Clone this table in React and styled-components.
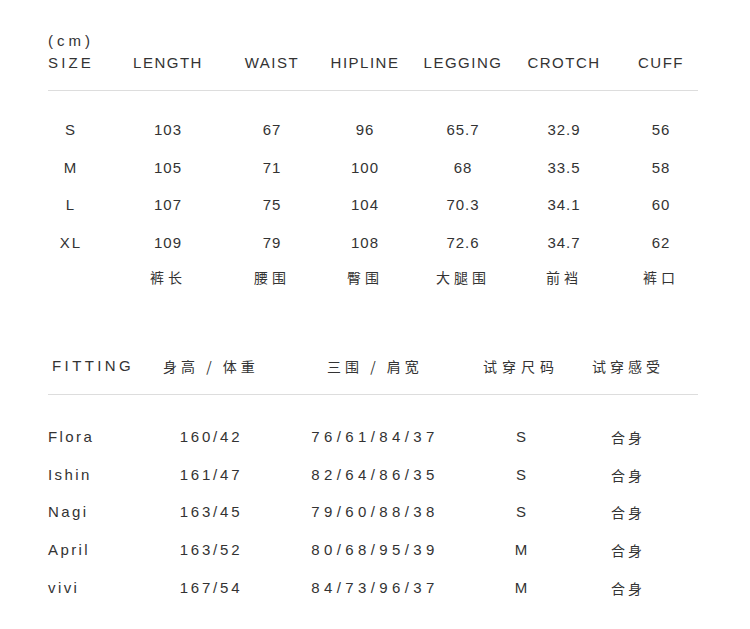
import React from 'react';
import styled, { createGlobalStyle } from 'styled-components';

const GlobalStyle = createGlobalStyle`
  html, body {
    margin: 0;
    padding: 0;
    background: #ffffff;
  }
  body {
    font-family: "Liberation Sans", Arial, "Noto Sans CJK SC", sans-serif;
    color: #333333;
  }
`;

// column widths chosen so the centres land where the printed chart puts them
const sizeCols = '98px 96px 112px 74px 122px 80px 114px';
const fitCols = '81px 164px 164px 128px 86px';

const sizeRows = [
  ['S', '103', '67', '96', '65.7', '32.9', '56'],
  ['M', '105', '71', '100', '68', '33.5', '58'],
  ['L', '107', '75', '104', '70.3', '34.1', '60'],
  ['XL', '109', '79', '108', '72.6', '34.7', '62'],
];

const sizeHeads = ['SIZE', 'LENGTH', 'WAIST', 'HIPLINE', 'LEGGING', 'CROTCH', 'CUFF'];
const cnLabels = ['', '裤长', '腰围', '臀围', '大腿围', '前裆', '裤口'];

const fitRows = [
  ['Flora', '160/42', '76/61/84/37', 'S', '合身'],
  ['Ishin', '161/47', '82/64/86/35', 'S', '合身'],
  ['Nagi', '163/45', '79/60/88/38', 'S', '合身'],
  ['April', '163/52', '80/68/95/39', 'M', '合身'],
  ['vivi', '167/54', '84/73/96/37', 'M', '合身'],
];

const Page = styled.div`
  width: 750px;
  height: 629px;
  padding-top: 32px;
  box-sizing: border-box;
  overflow: hidden;
`;

const Unit = styled.div`
  margin-left: 48px;
  font-size: 15px;
  line-height: 18px;
  letter-spacing: 4px;
`;

const Grid = styled.div`
  display: grid;
  grid-template-columns: ${({ $cols }) => $cols};
  margin-left: ${({ $left }) => $left}px;
  height: ${({ $h }) => $h}px;
  align-items: center;
  margin-top: ${({ $top }) => $top || 0}px;
`;

const Cell = styled.div`
  text-align: ${({ $align }) => $align || 'center'};
  padding-left: ${({ $pad }) => $pad || 0}px;
  font-size: 15px;
  line-height: 18px;
  letter-spacing: ${({ $ls }) => $ls ?? 1}px;
  white-space: nowrap;
`;

const CnCell = styled.div`
  text-align: ${({ $align }) => $align || 'center'};
  font-family: "Noto Sans CJK SC", "Liberation Sans", sans-serif;
  font-size: 14px;
  line-height: 18px;
  letter-spacing: ${({ $ls }) => $ls ?? 4}px;
  white-space: nowrap;
  color: #333333;
`;

const Rule = styled.div`
  margin: ${({ $top }) => $top}px 52px 0 48px;
  height: 1px;
  background: #dddddd;
`;

const SectionGap = styled.div`
  height: ${({ $h }) => $h}px;
`;

const App = () => {
  return (
    <Page>
      <GlobalStyle />
      <Unit>(cm)</Unit>
      <Grid $cols={sizeCols} $left={22} $h={18} $top={4}>
        {sizeHeads.map((h, i) => (
          <Cell key={h} $ls={i === 0 ? 3.2 : 1.5}>{h}</Cell>
        ))}
      </Grid>
      <Rule $top={18} />
      <SectionGap $h={20} />
      {sizeRows.map((row) => (
        <Grid key={row[0]} $cols={sizeCols} $left={22} $h={37.75}>
          {row.map((v, i) => (
            <Cell key={i} $ls={i === 0 ? 2 : 1}>{v}</Cell>
          ))}
        </Grid>
      ))}
      <Grid $cols={sizeCols} $left={22} $h={29}>
        {cnLabels.map((v, i) => (
          <CnCell key={i}>{v}</CnCell>
        ))}
      </Grid>

      <SectionGap $h={66} />
      <Grid $cols={fitCols} $left={48} $h={18}>
        <Cell $align="left" $pad={4} $ls={3.4}>FITTING</Cell>
        <CnCell>身高 / 体重</CnCell>
        <CnCell>三围 / 肩宽</CnCell>
        <CnCell $ls={5}>试穿尺码</CnCell>
        <CnCell>试穿感受</CnCell>
      </Grid>
      <Rule $top={19} />
      <SectionGap $h={23} />
      {fitRows.map((row) => (
        <Grid key={row[0]} $cols={fitCols} $left={48} $h={37.75}>
          <Cell $align="left" $ls={2.4}>{row[0]}</Cell>
          <Cell $ls={2.8}>{row[1]}</Cell>
          <Cell $ls={4.4}>{row[2]}</Cell>
          <Cell $ls={0}>{row[3]}</Cell>
          <CnCell $ls={3}>{row[4]}</CnCell>
        </Grid>
      ))}
    </Page>
  );
};

export default App;
